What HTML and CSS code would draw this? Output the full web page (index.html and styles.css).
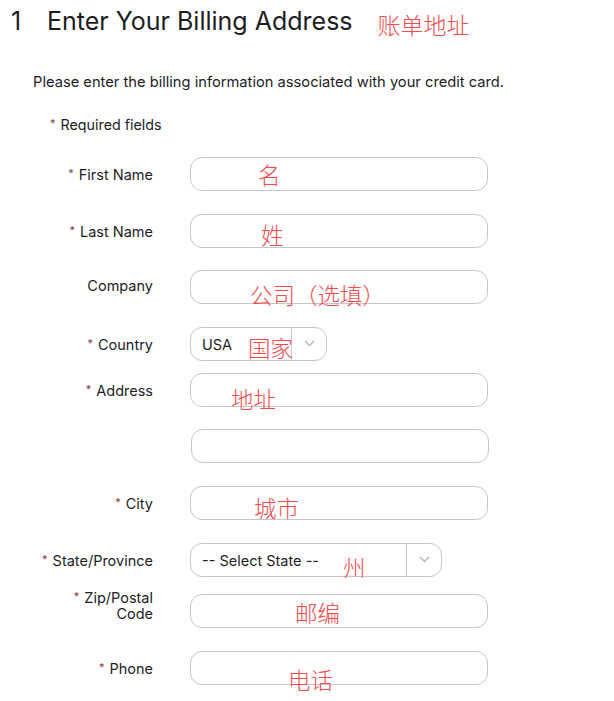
FILE: index.html
```html
<!DOCTYPE html>
<html lang="en">
<head>
  <meta charset="UTF-8" />
  <meta name="viewport" content="width=device-width, initial-scale=1.0" />
  <title>Billing Address</title>
  <link rel="stylesheet" href="styles.css">
</head>
<body>
  <div class="step-head">
    <span class="step-num">1</span>
    <h1>Enter Your Billing Address</h1>
    <span class="note note-title">账单地址</span>
  </div>

  <p class="intro">Please enter the billing information associated with your credit card.</p>
  <p class="required"><span class="star">*</span>Required fields</p>

  <form class="billing-form">
    <div class="row">
      <label><span class="star">*</span>First Name</label>
      <div class="field">
        <input type="text">
        <span class="note" style="left: 68px; top: 5px;">名</span>
      </div>
    </div>

    <div class="row">
      <label><span class="star">*</span>Last Name</label>
      <div class="field">
        <input type="text">
        <span class="note" style="left: 71px; top: 8px;">姓</span>
      </div>
    </div>

    <div class="row">
      <label>Company</label>
      <div class="field">
        <input type="text">
        <span class="note" style="left: 60px; top: 12px;">公司（选填）</span>
      </div>
    </div>

    <div class="row row-tight">
      <label><span class="star">*</span>Country</label>
      <div class="field">
        <div class="select select-country">
          <span class="select-value">USA</span>
          <span class="select-arrow">
            <svg width="11" height="7" viewBox="0 0 11 7"><path d="M1 1l4.5 4.5L10 1" fill="none" stroke="#b8b8b8" stroke-width="1.4"/></svg>
          </span>
        </div>
        <span class="note" style="left: 58px; top: 8px;">国家</span>
      </div>
    </div>

    <div class="row">
      <label><span class="star">*</span>Address</label>
      <div class="field">
        <input type="text">
        <span class="note" style="left: 41px; top: 13px;">地址</span>
      </div>
    </div>

    <div class="row row-addr2">
      <label></label>
      <div class="field">
        <input type="text" class="input-offset">
      </div>
    </div>

    <div class="row">
      <label><span class="star">*</span>City</label>
      <div class="field">
        <input type="text">
        <span class="note" style="left: 64px; top: 9px;">城市</span>
      </div>
    </div>

    <div class="row row-mid">
      <label><span class="star">*</span>State/Province</label>
      <div class="field">
        <div class="select select-state">
          <span class="select-value">-- Select State --</span>
          <span class="select-arrow">
            <svg width="11" height="7" viewBox="0 0 11 7"><path d="M1 1l4.5 4.5L10 1" fill="none" stroke="#b8b8b8" stroke-width="1.4"/></svg>
          </span>
        </div>
        <span class="note" style="left: 153px; top: 11px;">州</span>
      </div>
    </div>

    <div class="row row-zip">
      <label><span class="star">*</span>Zip/Postal<br>Code</label>
      <div class="field">
        <input type="text">
        <span class="note" style="left: 105px; top: 6px;">邮编</span>
      </div>
    </div>

    <div class="row">
      <label><span class="star">*</span>Phone</label>
      <div class="field">
        <input type="text">
        <span class="note" style="left: 98px; top: 16px;">电话</span>
      </div>
    </div>
  </form>
</body>
</html>
```

FILE: styles.css
```css
body {
  font-family: Inter, "Noto Sans", Arial, sans-serif;
  margin: 0;
  padding: 0;
  background-color: #ffffff;
  color: #1d1d1f;
}

.step-head {
  display: flex;
  align-items: flex-start;
  padding: 5px 0 0 11px;
  height: 40px;
}

.step-num {
  font-size: 25px;
  line-height: 32px;
  width: 36px;
}

h1 {
  margin: 0;
  font-size: 25px;
  font-weight: 400;
  line-height: 32px;
}

.note {
  position: absolute;
  font-family: "Noto Sans CJK SC", sans-serif;
  font-weight: 300;
  font-size: 22.5px;
  line-height: 24px;
  color: #f24b4b;
  white-space: nowrap;
  pointer-events: none;
}

.note-title {
  position: static;
  margin: 7px 0 0 25px;
  font-size: 23px;
}

.intro {
  margin: 27px 0 0 33px;
  font-size: 14.7px;
  line-height: 20px;
}

.required {
  margin: 22px 0 0 50px;
  font-size: 14.3px;
  line-height: 18px;
}

.star {
  color: #8e3b3b;
  font-size: 11px;
  vertical-align: 3px;
  margin-right: 5px;
}

.billing-form {
  margin-top: 23px;
}

.row {
  display: grid;
  grid-template-columns: 153px 298px;
  column-gap: 37px;
  align-items: start;
  margin-bottom: 22.5px;
}

.row-tight {
  margin-bottom: 12px;
}

.row-addr2 {
  margin-bottom: 23px;
}

.row-mid {
  margin-bottom: 11.5px;
}

.row label {
  text-align: right;
  font-size: 14.5px;
  line-height: 16px;
  padding-top: 8px;
}

.row-zip label {
  padding-top: 0;
  line-height: 16px;
}

.row-zip .field {
  margin-top: 6px;
}

.field {
  position: relative;
  height: 34px;
}

input[type="text"] {
  box-sizing: border-box;
  width: 298px;
  height: 34px;
  border: 1px solid #c6c6c6;
  border-radius: 12px;
  background: #fff;
  font: inherit;
  padding: 0 12px;
  margin: 0;
  display: block;
}

.input-offset {
  margin-left: 1px !important;
}

.select {
  box-sizing: border-box;
  display: flex;
  align-items: center;
  height: 34px;
  border: 1px solid #c6c6c6;
  border-radius: 12px;
  background: #fff;
}

.select-country {
  width: 137px;
}

.select-state {
  width: 252px;
}

.select-value {
  flex: 1;
  padding-left: 11px;
  font-size: 14.5px;
  padding-top: 1px;
}

.select-arrow {
  width: 34px;
  height: 100%;
  border-left: 1px solid #c6c6c6;
  display: flex;
  align-items: center;
  justify-content: center;
}
```
